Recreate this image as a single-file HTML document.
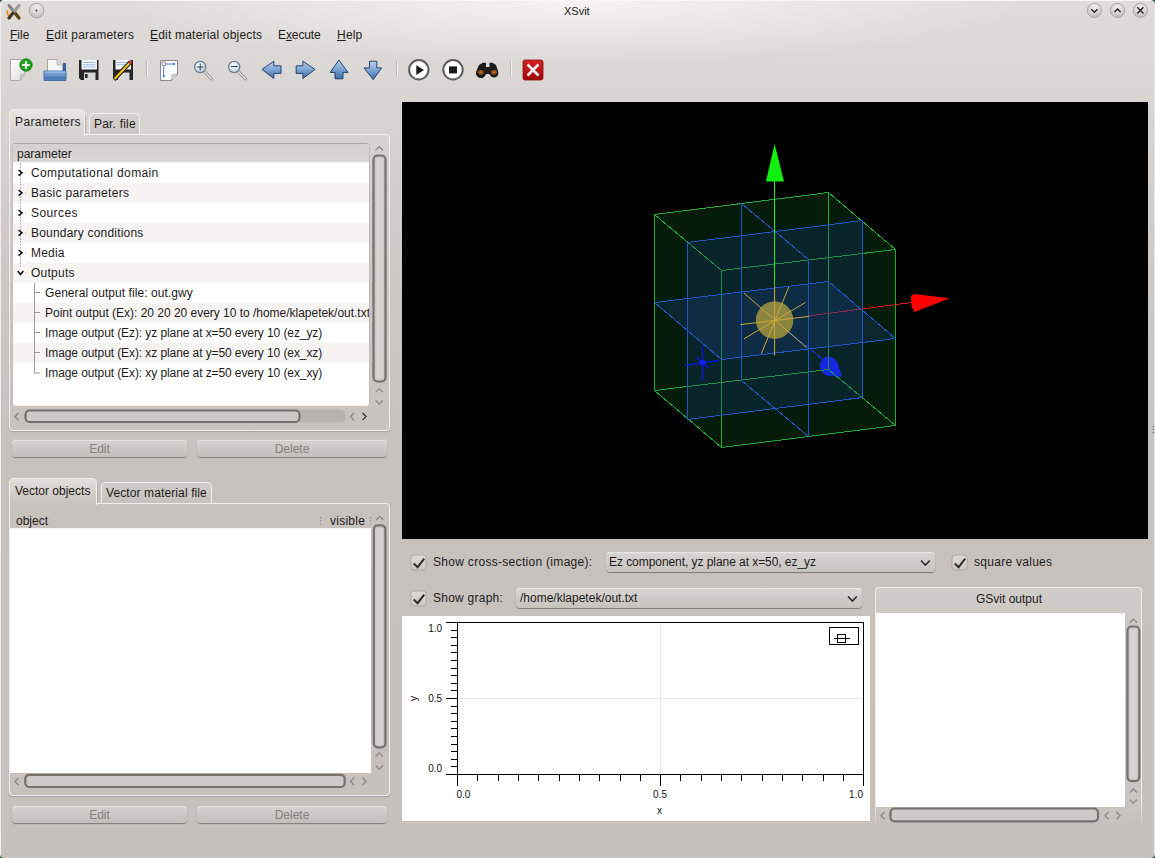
<!DOCTYPE html>
<html><head><meta charset="utf-8">
<style>
*{margin:0;padding:0;box-sizing:border-box}
html,body{width:1155px;height:858px;overflow:hidden}
body{position:relative;font-family:"Liberation Sans",sans-serif;font-size:12px;color:#1e1c1b;
background:linear-gradient(#e0dcd9 0px,#dad6d3 80px,#d6d2cf 140px,#cdc8c4 280px,#c7c2be 450px,#c6c1bd 858px);}
.a{position:absolute}
.t{position:absolute;white-space:pre;line-height:14px}
#hl{left:127px;top:-65px;width:900px;height:130px;border-radius:50%;background:radial-gradient(closest-side,rgba(255,255,255,.7),rgba(255,255,255,.3) 55%,rgba(255,255,255,0));}
.frame{position:absolute;border:1px solid #ebe8e6;border-radius:4px;box-shadow:inset 0 1px 0 #f3f1ef, 0 1px 1px rgba(0,0,0,.12);}
.btn{position:absolute;border-radius:4px;background:linear-gradient(#d5d1ce,#c3bfbb);box-shadow:0 1px 1px rgba(0,0,0,.35), inset 0 1px 0 #e6e3e1;color:#85817e;text-align:center;line-height:19px}
.white{position:absolute;background:#fff}
.u{text-decoration:underline}
</style></head><body>
<div class="a" id="hl"></div>
<!-- window borders -->
<div class="a" style="left:0;top:0;width:1px;height:858px;background:#f0eeed"></div>
<div class="a" style="left:1154px;top:0;width:1px;height:858px;background:#eae7e5"></div>

<!-- title -->
<div class="t" style="left:564px;top:4px;font-size:11px;color:#222">XSvit</div>

<!-- menu -->
<div class="t" style="left:10px;top:28px"><span class="u">F</span>ile</div>
<div class="t" style="left:46px;top:28px;letter-spacing:.24px"><span class="u">E</span>dit parameters</div>
<div class="t" style="left:150px;top:28px;letter-spacing:.2px"><span class="u">E</span>dit material objects</div>
<div class="t" style="left:278px;top:28px;letter-spacing:-.1px">E<span class="u">x</span>ecute</div>
<div class="t" style="left:337px;top:28px;letter-spacing:.2px"><span class="u">H</span>elp</div>

<!-- app icon -->
<svg class="a" style="left:4px;top:2px" width="20" height="18" viewBox="0 0 20 18">
 <path d="M3.5 8 A6 6 0 0 0 5 14" stroke="#f08a10" stroke-width="1.6" fill="none"/>
 <path d="M15.5 6 A6 6 0 0 1 15 13" stroke="#f5c070" stroke-width="1" fill="none" opacity=".6"/>
 <path d="M5 3.5 L15 16" stroke="#8a8580" stroke-width="3" stroke-linecap="round"/>
 <path d="M11 11 L15 16" stroke="#5a4510" stroke-width="3" stroke-linecap="round"/>
 <path d="M15 3.5 L5 16" stroke="#a09c98" stroke-width="3" stroke-linecap="round"/>
 <path d="M9 11 L5 16" stroke="#4a3a20" stroke-width="3" stroke-linecap="round"/>
</svg>
<svg class="a" style="left:28px;top:2px" width="17" height="17" viewBox="0 0 17 17">
 <defs><radialGradient id="gb" cx=".5" cy=".3" r=".7"><stop offset="0" stop-color="#f2f1f0"/><stop offset="1" stop-color="#c4c1be"/></radialGradient></defs>
 <circle cx="8.5" cy="8.5" r="7.3" fill="url(#gb)" stroke="#9d9996" stroke-width=".8"/>
 <circle cx="8.5" cy="8.5" r=".9" fill="#333"/>
</svg>
<svg class="a" style="left:1085px;top:1px" width="65" height="19" viewBox="0 0 65 19">
 <defs><radialGradient id="gw" cx=".5" cy=".3" r=".75"><stop offset="0" stop-color="#f3f2f1"/><stop offset=".55" stop-color="#d9d6d3"/><stop offset="1" stop-color="#b3afac"/></radialGradient></defs>
 <circle cx="9.4" cy="9.4" r="7.1" fill="url(#gw)" stroke="#a8a4a1" stroke-width=".9"/>
 <circle cx="32.5" cy="9.4" r="7.1" fill="url(#gw)" stroke="#a8a4a1" stroke-width=".9"/>
 <circle cx="55.4" cy="9.4" r="7.1" fill="url(#gw)" stroke="#a8a4a1" stroke-width=".9"/>
 <path d="M6.3 8.3 L9.4 11.2 L12.5 8.3" stroke="#222" stroke-width="1.4" fill="none"/>
 <path d="M29.4 11 L32.5 8 L35.6 11" stroke="#222" stroke-width="1.4" fill="none"/>
 <path d="M52.3 6.3 L58.5 12.5 M58.5 6.3 L52.3 12.5" stroke="#222" stroke-width="1.4" fill="none"/>
</svg>
<svg class="a" style="left:0;top:54px" width="560" height="32" viewBox="0 54 560 32">
 <defs>
  <linearGradient id="pg" x1="0" y1="0" x2="1" y2="1"><stop offset="0" stop-color="#ffffff"/><stop offset="1" stop-color="#dcdcdc"/></linearGradient>
  <linearGradient id="ag" x1="0" y1="0" x2="0" y2="1"><stop offset="0" stop-color="#b8cfea"/><stop offset=".5" stop-color="#7da3d3"/><stop offset="1" stop-color="#3e6aa6"/></linearGradient>
  <linearGradient id="agh" x1="0" y1="0" x2="1" y2="0"><stop offset="0" stop-color="#b8cfea"/><stop offset=".5" stop-color="#7da3d3"/><stop offset="1" stop-color="#3e6aa6"/></linearGradient>
  <linearGradient id="fg" x1="0" y1="0" x2="0" y2="1"><stop offset="0" stop-color="#86acd9"/><stop offset="1" stop-color="#4a7bbf"/></linearGradient>
  <linearGradient id="rg" x1="0" y1="0" x2="0" y2="1"><stop offset="0" stop-color="#d42020"/><stop offset="1" stop-color="#a00808"/></linearGradient>
  <radialGradient id="lens" cx=".4" cy=".35" r=".7"><stop offset="0" stop-color="#ffffff"/><stop offset="1" stop-color="#b9cbe0"/></radialGradient>
 </defs>
 <!-- new -->
 <path d="M10.5 59.5 H25 V74 L20 80.5 H10.5 Z" fill="url(#pg)" stroke="#a8a8a8" stroke-width="1"/>
 <path d="M20 80.5 L21 75 L25 74" fill="#cfcfcf" stroke="#a8a8a8" stroke-width=".8"/>
 <circle cx="26" cy="65" r="6.2" fill="#1aa31a" stroke="#0d7a0d" stroke-width=".8"/>
 <path d="M26 61.2 V68.8 M22.2 65 H29.8" stroke="#fff" stroke-width="2.2"/>
 <!-- open -->
 <path d="M63 63 H66 V72 H63 Z" fill="#3a64a0"/>
 <path d="M47.5 59.5 H57 L62.5 65 V73 H47.5 Z" fill="#f6f6f6" stroke="#a0a0a0" stroke-width=".9"/>
 <path d="M57 59.5 V65 H62.5" fill="#dcdcdc" stroke="#a0a0a0" stroke-width=".7"/>
 <path d="M44 71 H66 V80.5 H44 Z" fill="url(#fg)" stroke="#3a66a0" stroke-width=".9"/>
 <path d="M44.5 72 H65.5" stroke="#a9c6ea" stroke-width="1"/>
 <path d="M44.5 77.8 H65.5" stroke="#3a66a0" stroke-width=".8"/>
 <!-- save -->
 <path d="M79 60 H98.5 V80 H81 L79 78 Z" fill="#262626"/>
 <rect x="81.5" y="60" width="15.5" height="9.5" fill="#eef3f9"/>
 <path d="M83 62.5 H95.5 M83 64.7 H95.5 M83 66.9 H95.5" stroke="#8db0d8" stroke-width=".8"/>
 <rect x="84" y="72.5" width="11.5" height="7.5" fill="#d8d8d8"/>
 <rect x="85" y="74" width="2.6" height="4" fill="#2a2a2a"/>
 <!-- save as -->
 <path d="M113 60 H133 V80 H115 L113 78 Z" fill="#262626"/>
 <rect x="115.5" y="60" width="15.5" height="9.5" fill="#eef3f9"/>
 <path d="M117 62.5 H129 M117 64.7 H127" stroke="#8db0d8" stroke-width=".8"/>
 <rect x="118" y="72.5" width="11.5" height="7.5" fill="#d8d8d8"/>
 <path d="M114 79.5 L130.5 62" stroke="#1a1a1a" stroke-width="4.2"/>
 <path d="M114.5 79 L130.5 62" stroke="#f0c020" stroke-width="2.2"/>
 <path d="M129.3 63.2 L131.5 61" stroke="#d03030" stroke-width="3"/>
 <!-- separators -->
 <path d="M146.5 61 V77" stroke="#bdb9b6" stroke-width="1"/><path d="M147.5 61 V77" stroke="#f2f0ee" stroke-width="1"/>
 <path d="M396.5 61 V77" stroke="#bdb9b6" stroke-width="1"/><path d="M397.5 61 V77" stroke="#f2f0ee" stroke-width="1"/>
 <path d="M510.5 61 V77" stroke="#bdb9b6" stroke-width="1"/><path d="M511.5 61 V77" stroke="#f2f0ee" stroke-width="1"/>
 <!-- page -->
 <path d="M160.5 60.5 H177.5 V74 L171.5 80.5 H160.5 Z" fill="#fbfbfb" stroke="#8a8a8a" stroke-width="1"/>
 <path d="M171.5 80.5 L172 75 L177.5 74" fill="#dadada" stroke="#9a9a9a" stroke-width=".7"/>
 <rect x="162" y="62" width="3.5" height="3.5" fill="#eee" stroke="#777" stroke-width=".7"/>
 <path d="M166 64 H175 M163.7 66 V77" stroke="#3d7fe0" stroke-width="1"/>
 <path d="M175.5 64 L173 62.5 V65.5 Z M163.7 78 L162.2 75.5 H165.2 Z" fill="#3d7fe0"/>
 <!-- zoom in/out -->
 <path d="M204 71 L211.5 79" stroke="#8d8d8d" stroke-width="3" stroke-linecap="round"/>
 <path d="M204 71 L211.5 79" stroke="#e6e6e6" stroke-width="1.3" stroke-linecap="round"/>
 <circle cx="200.2" cy="67" r="5.6" fill="url(#lens)" stroke="#6e7c8c" stroke-width="1.2"/>
 <path d="M200.2 63.6 V70.4 M196.8 67 H203.6" stroke="#34465a" stroke-width="1.1"/>
 <path d="M238 71 L245.5 79" stroke="#8d8d8d" stroke-width="3" stroke-linecap="round"/>
 <path d="M238 71 L245.5 79" stroke="#e6e6e6" stroke-width="1.3" stroke-linecap="round"/>
 <circle cx="234.2" cy="67" r="5.6" fill="url(#lens)" stroke="#6e7c8c" stroke-width="1.2"/>
 <path d="M230.8 66.5 H237.6" stroke="#34465a" stroke-width="1.1"/>
 <!-- arrows -->
 <path d="M262 69.4 L273.8 61.2 V65.8 H281 V73.4 H273.8 V78.5 Z" fill="url(#ag)" stroke="#1f4576" stroke-width="1"/>
 <path d="M315 69.4 L302.9 61.2 V65.8 H296.2 V73.4 H302.9 V78.5 Z" fill="url(#ag)" stroke="#1f4576" stroke-width="1"/>
 <path d="M338.9 60 L348 72.4 H343 V78.8 H335 V72.4 H330.2 Z" fill="url(#ag)" stroke="#1f4576" stroke-width="1"/>
 <path d="M373.2 79.7 L381.7 67.9 H376.8 V61.2 H369.5 V67.9 H364.1 Z" fill="url(#ag)" stroke="#1f4576" stroke-width="1"/>
 <!-- play / stop -->
 <circle cx="418.8" cy="69.8" r="9.7" fill="#fff" stroke="#5d5d5d" stroke-width="2"/>
 <path d="M416.3 65.2 L423.9 70 L416.3 74.9 Z" fill="#1a1a1a"/>
 <circle cx="453" cy="69.8" r="9.7" fill="#fff" stroke="#5d5d5d" stroke-width="2"/>
 <rect x="449" y="66.4" width="8" height="7" fill="#1a1a1a"/>
 <!-- binoculars -->
 <path d="M479 65 L483 62.8 H486 V67 H489.5 V62.8 H492.5 L496 65 L498.3 72 A4.5 4.5 0 0 1 489.5 74 H486 A4.5 4.5 0 0 1 476 72 Z" fill="#1b1b1b"/>
 <ellipse cx="480.8" cy="72.3" rx="3.1" ry="2.4" fill="#8a4a1a"/>
 <ellipse cx="494" cy="72.3" rx="3.1" ry="2.4" fill="#8a4a1a"/>
 <ellipse cx="480.8" cy="72.3" rx="1.4" ry="1" fill="#c07030"/>
 <ellipse cx="494" cy="72.3" rx="1.4" ry="1" fill="#c07030"/>
 <!-- close -->
 <rect x="523" y="60" width="20" height="20" rx="2" fill="url(#rg)" stroke="#8a1010" stroke-width=".8"/>
 <path d="M527.5 64.5 L538.5 75.5 M538.5 64.5 L527.5 75.5" stroke="#f2f2f2" stroke-width="2.6"/>
</svg>
<!-- ===== Parameters panel ===== -->
<!-- pane -->
<div class="a" style="left:9px;top:134px;width:381px;height:297px;border:1px solid #f1efed;border-radius:0 4px 4px 4px;box-shadow:0 1px 1px rgba(0,0,0,.18)"></div>
<!-- inactive tab -->
<div class="a" style="left:89px;top:113px;width:51px;height:21px;border:1px solid #f2f0ee;border-bottom:none;border-radius:5px 5px 0 0;background:linear-gradient(#d6d2cf,#ccc8c4)"></div>
<div class="t" style="left:94px;top:117px;letter-spacing:.2px">Par. file</div>
<!-- active tab -->
<div class="a" style="left:9px;top:109px;width:76px;height:27px;border:1px solid #efedeb;border-bottom:none;border-radius:5px 5px 0 0;background:linear-gradient(#e8e6e4,#d9d5d2 70%,#d8d4d1);"></div>
<div class="a" style="left:85px;top:116px;width:1px;height:18px;background:#bdb9b6"></div>
<div class="t" style="left:15px;top:115px;letter-spacing:.4px">Parameters</div>
<!-- tree frame -->
<div class="a" style="left:12px;top:143px;width:358px;height:263px;border-radius:4px;background:#fff;border:1px solid #b3aeaa;border-top-color:#aaa5a1;border-bottom-color:#f0eeec;border-left-color:#c2bdb9;border-right-color:#c2bdb9"></div>
<div class="a" style="left:13px;top:144px;width:356px;height:19px;border-radius:3px 3px 0 0;background:linear-gradient(#d4d0cd,#d9d6d3);border-bottom:1px solid #f4f3f2"></div>
<div class="t" style="left:17px;top:147px">parameter</div>
<!-- stripes -->
<div class="a" style="left:13px;top:183px;width:356px;height:20px;background:#f5f4f3"></div>
<div class="a" style="left:13px;top:223px;width:356px;height:20px;background:#f5f4f3"></div>
<div class="a" style="left:13px;top:263px;width:356px;height:20px;background:#f5f4f3"></div>
<div class="a" style="left:13px;top:303px;width:356px;height:20px;background:#f5f4f3"></div>
<div class="a" style="left:13px;top:343px;width:356px;height:20px;background:#f5f4f3"></div>
<!-- tree lines -->
<svg class="a" style="left:13px;top:163px" width="356" height="220" viewBox="13 163 356 220">
 <path d="M20.5 163 V268" stroke="#b2b2b2" stroke-width="1" stroke-dasharray="2 1" shape-rendering="crispEdges"/>
 <path d="M22 173 L26 173 M22 193 L26 193 M22 213 L26 213 M22 233 L26 233 M22 253 L26 253 M22 273 L26 273" stroke="#b0b0b0" stroke-width="1" stroke-dasharray="1 2"/>
 <g fill="none" stroke="#111" stroke-width="1.5">
  <path d="M18.5 170 L22 172.8 L18.5 175.6"/>
  <path d="M18.5 190 L22 192.8 L18.5 195.6"/>
  <path d="M18.5 210 L22 212.8 L18.5 215.6"/>
  <path d="M18.5 230 L22 232.8 L18.5 235.6"/>
  <path d="M18.5 250 L22 252.8 L18.5 255.6"/>
  <path d="M17.7 271 L20.5 274.5 L23.3 271"/>
 </g>
 <path d="M34.5 283 V373.5 M34.5 292.5 H40 M34.5 312.5 H40 M34.5 332.5 H40 M34.5 352.5 H40 M34.5 373 H40" stroke="#9a9a9a" stroke-width="1" fill="none"/>
</svg>
<div class="t" style="left:31px;top:166px;letter-spacing:.38px">Computational domain</div>
<div class="t" style="left:31px;top:186px;letter-spacing:.31px">Basic parameters</div>
<div class="t" style="left:31px;top:206px;letter-spacing:.42px">Sources</div>
<div class="t" style="left:31px;top:226px;letter-spacing:.2px">Boundary conditions</div>
<div class="t" style="left:31px;top:246px;letter-spacing:.2px">Media</div>
<div class="t" style="left:31px;top:266px;letter-spacing:.25px">Outputs</div>
<div class="a" style="left:13px;top:283px;width:356px;height:100px;overflow:hidden">
<div class="t" style="left:32px;top:3px;letter-spacing:.06px">General output file: out.gwy</div>
<div class="t" style="left:32px;top:23px;letter-spacing:-.02px">Point output (Ex): 20 20 20 every 10 to /home/klapetek/out.txt</div>
<div class="t" style="left:32px;top:43px;letter-spacing:-.09px">Image output (Ez): yz plane at x=50 every 10 (ez_yz)</div>
<div class="t" style="left:32px;top:63px;letter-spacing:-.09px">Image output (Ex): xz plane at y=50 every 10 (ex_xz)</div>
<div class="t" style="left:32px;top:83px;letter-spacing:-.09px">Image output (Ex): xy plane at z=50 every 10 (ex_xy)</div>
</div>
<!-- v scrollbar -->
<svg class="a" style="left:370px;top:140px" width="20" height="270" viewBox="370 140 20 270">
 <path d="M375.7 150.2 L379.3 146.6 L382.9 150.2" stroke="#8a8683" stroke-width="1.25" fill="none"/>
 <rect x="373.5" y="155.5" width="12" height="226" rx="4" fill="#cbc7c4" stroke="#75716e" stroke-width="2.2"/>
 <rect x="376" y="158" width="7" height="221" rx="2.5" fill="#d6d3d0"/>
 <path d="M375.7 392.2 L379.3 388.6 L382.9 392.2" stroke="#8f8b88" stroke-width="1.2" fill="none"/>
 <path d="M375.7 400.5 L379.3 404.1 L382.9 400.5" stroke="#8a8683" stroke-width="1.25" fill="none"/>
</svg>
<!-- h scrollbar -->
<svg class="a" style="left:12px;top:406px" width="360" height="20" viewBox="12 406 360 20">
 <path d="M18.5 413 L15 416.6 L18.5 420.2" stroke="#8a8683" stroke-width="1.25" fill="none"/>
 <rect x="25" y="409.5" width="320" height="13" rx="4.5" fill="#b9b3af"/>
 <rect x="25.5" y="410.5" width="274" height="11.5" rx="4" fill="#cdc9c6" stroke="#75716e" stroke-width="2.2"/>
 <path d="M354 413 L350.5 416.6 L354 420.2" stroke="#8a8683" stroke-width="1.25" fill="none"/>
 <path d="M362.5 413 L366 416.6 L362.5 420.2" stroke="#2a2a2a" stroke-width="1.2" fill="none"/>
</svg>
<!-- buttons -->
<div class="btn" style="left:12px;top:440px;width:175px;height:17px">Edit</div>
<div class="btn" style="left:197px;top:440px;width:190px;height:17px">Delete</div>

<!-- ===== Vector objects panel ===== -->
<div class="a" style="left:9px;top:503px;width:381px;height:293px;border:1px solid #f1efed;border-radius:0 4px 4px 4px;box-shadow:0 1px 1px rgba(0,0,0,.18)"></div>
<div class="a" style="left:101px;top:482px;width:111px;height:21px;border:1px solid #f2f0ee;border-bottom:none;border-radius:5px 5px 0 0;background:linear-gradient(#d1cdca,#c6c1bd)"></div>
<div class="t" style="left:106px;top:486px;letter-spacing:.11px">Vector material file</div>
<div class="a" style="left:9px;top:478px;width:88px;height:27px;border:1px solid #efedeb;border-bottom:none;border-radius:5px 5px 0 0;background:linear-gradient(#e2dfdc,#cbc6c2 80%,#c9c4c0)"></div>
<div class="a" style="left:97px;top:485px;width:1px;height:18px;background:#b5b0ac"></div>
<div class="t" style="left:15px;top:484px">Vector objects</div>
<div class="t" style="left:16px;top:514px">object</div>
<div class="t" style="left:330px;top:514px;letter-spacing:.25px">visible</div>
<svg class="a" style="left:318px;top:514px" width="56" height="12"><path d="M2.5 3 V11 M52.5 3 V11" stroke="#8a8682" stroke-width="1.2" stroke-dasharray="1.2 2"/></svg>
<div class="a" style="left:10px;top:528px;width:362px;height:1px;background:#f4f2f1"></div>
<div class="white" style="left:10px;top:529px;width:361px;height:244px"></div>
<svg class="a" style="left:370px;top:505px" width="20" height="270" viewBox="370 505 20 270">
 <path d="M376.2 520 L379.8 516.4 L383.4 520" stroke="#8a8683" stroke-width="1.25" fill="none"/>
 <rect x="373.8" y="525.3" width="11.6" height="222" rx="4" fill="#cbc7c4" stroke="#75716e" stroke-width="2.2"/>
 <rect x="376.3" y="528" width="6.6" height="217" rx="2.5" fill="#d6d3d0"/>
 <path d="M375.7 756.5 L379.3 752.9 L382.9 756.5" stroke="#8a8683" stroke-width="1.25" fill="none"/>
 <path d="M375.7 765.5 L379.3 769.1 L382.9 765.5" stroke="#8a8683" stroke-width="1.25" fill="none"/>
</svg>
<svg class="a" style="left:10px;top:773px" width="362" height="20" viewBox="10 773 362 20">
 <path d="M18.5 777.8 L15 781.4 L18.5 785" stroke="#8a8683" stroke-width="1.25" fill="none"/>
 <rect x="25.3" y="774.8" width="319.4" height="12.2" rx="4" fill="#cdc9c6" stroke="#75716e" stroke-width="2.2"/>
 <path d="M354 777.8 L350.5 781.4 L354 785" stroke="#8a8683" stroke-width="1.25" fill="none"/>
 <path d="M362.5 777.8 L366 781.4 L362.5 785" stroke="#8a8683" stroke-width="1.25" fill="none"/>
</svg>
<div class="btn" style="left:12px;top:806px;width:175px;height:17px">Edit</div>
<div class="btn" style="left:197px;top:806px;width:190px;height:17px">Delete</div>
<svg class="a" style="left:402px;top:102px" width="746" height="437" viewBox="402 102 746 437">
 <rect x="402" y="102" width="746" height="437" fill="#000"/>
 <polygon points="654.5,214.5 828.5,192.5 895.5,249.5 895.5,425.5 721.5,447.5 654.5,390.5" fill="#061c0b"/>
 <path d="M775 320 L822 359" stroke="#1530e8" stroke-width="1" shape-rendering="crispEdges"/>
 <polygon points="826,356.8 831,356.8 835,359.2 837.6,363 839.2,368 840.6,372 842.2,376.8 836,376.6 831,376 826,375.3 822.4,372.6 820,368 820,363 822,359.3" fill="#1420ff"/>
 <g stroke-width="1" fill="none" shape-rendering="crispEdges">
  <g stroke="#22aa36">
   <polygon points="654.5,214.5 828.5,192.5 895.5,249.5 721.5,270.5"/>
   <polygon points="654.5,390.5 828.5,369.5 895.5,425.5 721.5,447.5"/>
   <path d="M654.5 214.5 V390.5 M828.5 192.5 V369.5 M895.5 249.5 V425.5 M721.5 270.5 V447.5"/>
  </g>
  <path d="M808 316 L862 309" stroke="#d81a1a"/>
 </g>
 <polygon points="687.5,242.5 862.5,220.5 862.5,397.5 687.5,419.5" fill="rgb(22,64,131)" fill-opacity=".25"/>
 <polygon points="654.5,302.5 828.5,281.5 895.5,338.5 721.5,359.5" fill="rgb(26,69,149)" fill-opacity=".25"/>
 <g stroke-width="1" fill="none" shape-rendering="crispEdges">
  <g stroke="#1e55c8">
   <polygon points="741.5,203.5 808.5,259.5 808.5,436.5 741.5,380.5"/>
   <polygon points="687.5,242.5 862.5,220.5 862.5,397.5 687.5,419.5"/>
   <polygon points="654.5,302.5 828.5,281.5 895.5,338.5 721.5,359.5"/>
  </g>
  <path d="M862 309 L912 302.5" stroke="#d41818"/>
  <path d="M774.5 181 V285" stroke="#22e82a"/>
 </g>
 <polygon points="774.6,144 766,181.5 784,181.5" fill="#10f010"/>
 <polygon points="911,296 911.5,306 914.5,312 948.9,298.6 948,298 914,294" fill="#ff0000"/>
 <g stroke="#0a14f0" stroke-width="1.3">
  <path d="M702.4 345.2 V380.8 M685.2 365.3 L719.6 360.4 M696.3 357.2 L708.6 367.7"/>
 </g>
 <circle cx="702.4" cy="362.7" r="3" fill="#1020e8"/>
 <circle cx="774.6" cy="320.1" r="18.7" fill="#8c8540"/>
 <g stroke="#c9a83a" stroke-width="1">
  <path d="M774.6 285.6 V355.6"/>
  <path d="M744 293.1 L806.5 347.6"/>
  <path d="M788.8 287 L761.3 353.7"/>
  <path d="M805.6 302.4 L744 338.8"/>
  <path d="M740.3 324.6 L809.3 316.4"/>
 </g>
</svg>
<!-- checkboxes -->
<svg class="a" style="left:405px;top:550px" width="570" height="62" viewBox="405 550 570 62">
 <defs><linearGradient id="cbg" x1="0" y1="0" x2="0" y2="1"><stop offset="0" stop-color="#dcd9d6"/><stop offset="1" stop-color="#cdc9c5"/></linearGradient></defs>
 <g>
  <rect x="411" y="555" width="15" height="15" rx="3" fill="url(#cbg)" stroke="#a7a29e" stroke-width=".8"/>
  <path d="M413.8 563.5 L417.6 567.2 L424.2 558.6" stroke="#2b2b2b" stroke-width="1.9" fill="none"/>
  <rect x="411" y="591" width="15" height="15" rx="3" fill="url(#cbg)" stroke="#a7a29e" stroke-width=".8"/>
  <path d="M413.8 599.5 L417.6 603.2 L424.2 594.6" stroke="#2b2b2b" stroke-width="1.9" fill="none"/>
  <rect x="952" y="555" width="15" height="15" rx="3" fill="url(#cbg)" stroke="#a7a29e" stroke-width=".8"/>
  <path d="M954.8 563.5 L958.6 567.2 L965.2 558.6" stroke="#2b2b2b" stroke-width="1.9" fill="none"/>
 </g>
</svg>
<div class="t" style="left:433px;top:555px;letter-spacing:.3px">Show cross-section (image):</div>
<div class="t" style="left:433px;top:591px;letter-spacing:.25px">Show graph:</div>
<div class="t" style="left:974px;top:555px;letter-spacing:.28px">square values</div>
<!-- combos -->
<div class="a" style="left:606px;top:552px;width:329px;height:20px;border-radius:4px;background:linear-gradient(#d9d6d3,#c6c2be);box-shadow:0 1px 1px rgba(0,0,0,.38), inset 0 1px 0 #e9e7e5"></div>
<div class="t" style="left:609px;top:555px;letter-spacing:-.06px">Ez component, yz plane at x=50, ez_yz</div>
<div class="a" style="left:516px;top:588px;width:346px;height:20px;border-radius:4px;background:linear-gradient(#d9d6d3,#c6c2be);box-shadow:0 1px 1px rgba(0,0,0,.38), inset 0 1px 0 #e9e7e5"></div>
<div class="t" style="left:520px;top:591px">/home/klapetek/out.txt</div>
<svg class="a" style="left:915px;top:557px" width="20" height="12"><path d="M6 3.5 L10.4 8 L14.8 3.5" stroke="#2a2a2a" stroke-width="1.6" fill="none"/></svg>
<svg class="a" style="left:842px;top:593px" width="20" height="12"><path d="M6 3.5 L10.4 8 L14.8 3.5" stroke="#2a2a2a" stroke-width="1.6" fill="none"/></svg>

<!-- graph -->
<div class="white" style="left:402px;top:616px;width:468px;height:205px"></div>
<svg class="a" style="left:402px;top:616px" width="468" height="205" viewBox="402 616 468 205" font-family="Liberation Sans" font-size="10">
 <g shape-rendering="crispEdges">
 <path d="M660.5 623 V774 M458 698.5 H863" stroke="#e6e6e6" stroke-width="1"/>
 <rect x="457.5" y="622.5" width="406" height="152" fill="none" stroke="#000" stroke-width="1.3"/>
 <path d="M446 622.5 H458 M446 698.5 H458 M446 774.5 H458" stroke="#000" stroke-width="1.3"/>
 <path id="ytk" d="M451 630.5 H458 M451 637.5 H458 M451 645.5 H458 M451 652.5 H458 M451 660.5 H458 M451 668.5 H458 M451 675.5 H458 M451 683.5 H458 M451 690.5 H458 M451 706.5 H458 M451 713.5 H458 M451 721.5 H458 M451 728.5 H458 M451 736.5 H458 M451 744.5 H458 M451 751.5 H458 M451 759.5 H458 M451 766.5 H458" stroke="#000" stroke-width="1.3"/>
 <path d="M457.5 774 V786 M660.5 774 V786 M863.5 774 V786" stroke="#000" stroke-width="1.3"/>
 <path d="M477.5 774 V781 M498.5 774 V781 M518.5 774 V781 M538.5 774 V781 M559.5 774 V781 M579.5 774 V781 M599.5 774 V781 M620.5 774 V781 M640.5 774 V781 M680.5 774 V781 M701.5 774 V781 M721.5 774 V781 M741.5 774 V781 M762.5 774 V781 M782.5 774 V781 M802.5 774 V781 M823.5 774 V781 M843.5 774 V781" stroke="#000" stroke-width="1.3"/>
 <rect x="829.5" y="627.5" width="29" height="17" fill="none" stroke="#000" stroke-width="1.3"/>
 <rect x="837.5" y="634.5" width="8" height="8" fill="none" stroke="#000" stroke-width="1.2"/>
 <path d="M834 638.5 H850" stroke="#000" stroke-width="1.2"/>
 </g>
 <g fill="#111">
 <text x="428.2" y="632">1.0</text>
 <text x="428.2" y="702">0.5</text>
 <text x="428.2" y="771.5">0.0</text>
 <text x="456.5" y="797.7">0.0</text>
 <text x="660" y="797.7" text-anchor="middle">0.5</text>
 <text x="863" y="797.7" text-anchor="end">1.0</text>
 <text x="659.5" y="814" text-anchor="middle">x</text>
 <text transform="translate(416.5 698.5) rotate(-90)" text-anchor="middle" font-size="11">y</text>
 </g>
</svg>

<!-- GSvit output -->
<div class="a" style="left:875px;top:587px;width:267px;height:240px;border-radius:4px 4px 0 0;background:linear-gradient(#d0ccc9,#cdc9c5 30px,#c9c4c0);border:1px solid #eeebe9;border-bottom:none"></div>
<div class="a" style="left:874px;top:800px;width:270px;height:28px;background:linear-gradient(rgba(198,193,189,0),#c6c1bd)"></div>
<div class="t" style="left:976px;top:592px">GSvit output</div>
<div class="white" style="left:876px;top:613px;width:249px;height:194px"></div>
<svg class="a" style="left:1124px;top:610px" width="18" height="200" viewBox="1124 610 18 200">
 <path d="M1129.8 622.8 L1133.4 619.2 L1137 622.8" stroke="#8a8683" stroke-width="1.25" fill="none"/>
 <rect x="1127.5" y="626.5" width="11.8" height="154.6" rx="4" fill="#cbc7c4" stroke="#75716e" stroke-width="2.2"/>
 <rect x="1130" y="629" width="6.8" height="149.6" rx="2.5" fill="#d6d3d0"/>
 <path d="M1129.8 792.6 L1133.4 789 L1137 792.6" stroke="#8a8683" stroke-width="1.25" fill="none"/>
 <path d="M1129.8 799.6 L1133.4 803.2 L1137 799.6" stroke="#8a8683" stroke-width="1.25" fill="none"/>
</svg>
<svg class="a" style="left:876px;top:806px" width="250" height="20" viewBox="876 806 250 20">
 <path d="M884.5 812 L881 815.6 L884.5 819.2" stroke="#8a8683" stroke-width="1.25" fill="none"/>
 <rect x="890.5" y="808.5" width="207.5" height="12.8" rx="4" fill="#cdc9c6" stroke="#75716e" stroke-width="2.2"/>
 <path d="M1108.5 812 L1105 815.6 L1108.5 819.2" stroke="#8a8683" stroke-width="1.25" fill="none"/>
 <path d="M1116.5 812 L1120 815.6 L1116.5 819.2" stroke="#8a8683" stroke-width="1.25" fill="none"/>
</svg>
<!-- window corners -->
<div class="a" style="left:0;top:0;width:1155px;height:1px;background:#f7f6f5"></div>
<svg class="a" style="left:0;top:0" width="1155" height="858">
 <path d="M0 0 H3 Q0.5 0.5 0 3 Z" fill="#2f5e3c"/>
 <path d="M1155 0 H1151 Q1154.5 0.5 1155 4 Z" fill="#2f5e3c"/>
 <path d="M0 858 H3 Q0.5 857.5 0 855 Z" fill="#2f5e3c"/>
 <path d="M1155 858 H1151 Q1154.5 857.5 1155 854 Z" fill="#2f5e3c"/>
 <circle cx="1153.5" cy="426.5" r=".8" fill="#6e6a67"/><circle cx="1153.5" cy="429.5" r=".8" fill="#6e6a67"/><circle cx="1153.5" cy="432.5" r=".8" fill="#6e6a67"/>
</svg>
</body></html>
